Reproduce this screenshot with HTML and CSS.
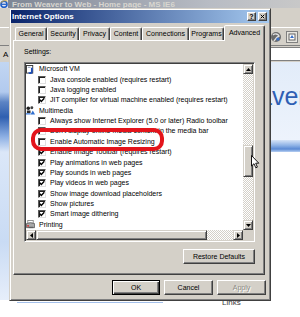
FILE: index.html
```html
<!DOCTYPE html>
<html>
<head>
<meta charset="utf-8">
<link rel="stylesheet" href="styles.css">
</head>
<body>
<div class="browser">
  <div class="ie-title">
    <svg class="ie-icon" viewBox="0 0 8 8"><circle cx="4" cy="4.3" r="3" fill="none" stroke="#1f5fc8" stroke-width="1.6"/><path d="M1.5 4.3h5" stroke="#1f5fc8" stroke-width="1.2"/><path d="M0.5 3 C2 0.5 6 0.2 7.6 1.2" fill="none" stroke="#e8b020" stroke-width="0.8"/></svg>
    <span>From Weaver to Web - Home page - MS IE6</span>
  </div>
  <div class="ie-menubar"></div>
  <div class="ie-toolbar">
    <svg class="tb-icon" viewBox="0 0 12 14"><circle cx="6" cy="7" r="5" fill="#6b6b6b"/><path d="M3 5 C5 3 8 4 9 6 C7 7 5 9 4 11" fill="none" stroke="#e0e0e0" stroke-width="1.4"/><circle cx="8" cy="9" r="1.6" fill="#3a70c8"/></svg>
    <svg class="tb-icon" viewBox="0 0 12 14"><rect x="0.5" y="1.5" width="11" height="11" fill="#e8e6e0" stroke="#808080"/><rect x="3" y="4" width="6" height="6" fill="#fff" stroke="#606060"/><path d="M4 8 L6 5 L8 8 Z" fill="#3a70c8"/></svg>
  </div>
  <div class="ie-address">
    <span class="addr-label">A</span>
    <div class="addr-field"></div>
  </div>
  <div class="ie-page">
    <div class="page-side"></div>
    <div class="page-main">
      <div class="page-banner">Weaver</div>
      <div class="page-stripe"></div>
      <div class="page-body">
        <div class="page-foot">
          <div class="page-rule"></div>
          <span class="links">Links</span>
        </div>
      </div>
    </div>
  </div>
</div>

<div class="dialog">
  <div class="titlebar">
    <span class="title-text">Internet Options</span>
    <span class="tbtn help">?</span>
    <span class="tbtn close"><svg viewBox="0 0 7 7"><path d="M1 1 L6 6 M6 1 L1 6" stroke="#000" stroke-width="1.4"/></svg></span>
  </div>
  <div class="tabs">
    <div class="tab">General</div>
    <div class="tab">Security</div>
    <div class="tab">Privacy</div>
    <div class="tab">Content</div>
    <div class="tab">Connections</div>
    <div class="tab">Programs</div>
    <div class="tab active">Advanced</div>
  </div>
  <div class="panel">
    <div class="settings-label">Settings:</div>
    <div class="listbox">
      <div class="rows">
        <div class="row cat">
          <svg class="cat-icon" viewBox="0 0 10 10"><rect x="0.5" y="0.5" width="7" height="8.5" fill="#fff" stroke="#303030"/><path d="M6.5 3 L6.5 7.5 C6.5 9.5 3.5 9.5 3.5 8" fill="none" stroke="#1e4fb8" stroke-width="2"/><rect x="2" y="2" width="3" height="1" fill="#8090b0"/></svg>
          <span>Microsoft VM</span>
        </div>
        <div class="row opt"><span class="cb"></span><span>Java console enabled (requires restart)</span></div>
        <div class="row opt"><span class="cb"></span><span>Java logging enabled</span></div>
        <div class="row opt"><span class="cb checked"><svg viewBox="0 0 6 6"><path d="M0.8 2.8 L2.3 4.4 L5.3 1.2" fill="none" stroke="#000" stroke-width="1.4"/></svg></span><span>JIT compiler for virtual machine enabled (requires restart)</span></div>
        <div class="row cat">
          <svg class="cat-icon" viewBox="0 0 10 10"><circle cx="2.5" cy="2.5" r="2" fill="#202020"/><circle cx="6.5" cy="2" r="1.6" fill="#404040"/><rect x="1" y="5" width="4" height="3" fill="#2a2a2a"/><path d="M5 9.5 L7.5 5 L10 9.5 Z" fill="#2f6fd0"/><rect x="0" y="8" width="5" height="1.5" fill="#4a86e0"/></svg>
          <span>Multimedia</span>
        </div>
        <div class="row opt"><span class="cb"></span><span>Always show Internet Explorer (5.0 or later) Radio toolbar</span></div>
        <div class="row opt"><span class="cb"></span><span>Don't display online media content in the media bar</span></div>
        <div class="row opt"><span class="cb"></span><span>Enable Automatic Image Resizing</span></div>
        <div class="row opt"><span class="cb checked"><svg viewBox="0 0 6 6"><path d="M0.8 2.8 L2.3 4.4 L5.3 1.2" fill="none" stroke="#000" stroke-width="1.4"/></svg></span><span>Enable Image Toolbar (requires restart)</span></div>
        <div class="row opt"><span class="cb checked"><svg viewBox="0 0 6 6"><path d="M0.8 2.8 L2.3 4.4 L5.3 1.2" fill="none" stroke="#000" stroke-width="1.4"/></svg></span><span>Play animations in web pages</span></div>
        <div class="row opt"><span class="cb checked"><svg viewBox="0 0 6 6"><path d="M0.8 2.8 L2.3 4.4 L5.3 1.2" fill="none" stroke="#000" stroke-width="1.4"/></svg></span><span>Play sounds in web pages</span></div>
        <div class="row opt"><span class="cb checked"><svg viewBox="0 0 6 6"><path d="M0.8 2.8 L2.3 4.4 L5.3 1.2" fill="none" stroke="#000" stroke-width="1.4"/></svg></span><span>Play videos in web pages</span></div>
        <div class="row opt"><span class="cb checked"><svg viewBox="0 0 6 6"><path d="M0.8 2.8 L2.3 4.4 L5.3 1.2" fill="none" stroke="#000" stroke-width="1.4"/></svg></span><span>Show image download placeholders</span></div>
        <div class="row opt"><span class="cb checked"><svg viewBox="0 0 6 6"><path d="M0.8 2.8 L2.3 4.4 L5.3 1.2" fill="none" stroke="#000" stroke-width="1.4"/></svg></span><span>Show pictures</span></div>
        <div class="row opt"><span class="cb checked"><svg viewBox="0 0 6 6"><path d="M0.8 2.8 L2.3 4.4 L5.3 1.2" fill="none" stroke="#000" stroke-width="1.4"/></svg></span><span>Smart image dithering</span></div>
        <div class="row cat">
          <svg class="cat-icon" viewBox="0 0 10 10"><rect x="2" y="0.5" width="6" height="3" fill="#fff" stroke="#707070" stroke-width="0.8"/><path d="M0.5 4 Q5 2 9.5 4 L9.5 8.5 L0.5 8.5 Z" fill="#a8a8a8" stroke="#505050" stroke-width="0.8"/><circle cx="2.3" cy="6.5" r="1" fill="#e02020"/><rect x="3" y="7.5" width="5" height="1.5" fill="#606060"/></svg>
          <span>Printing</span>
        </div>
      </div>
      <div class="vscroll">
        <div class="sb-btn"><svg viewBox="0 0 5 3"><path d="M0 3 L5 3 L2.5 0 Z" fill="#000"/></svg></div>
        <div class="sb-thumb-v"></div>
        <div class="sb-btn sb-end"><svg viewBox="0 0 5 3"><path d="M0 0 L5 0 L2.5 3 Z" fill="#000"/></svg></div>
      </div>
      <div class="hscroll">
        <div class="sb-btn"><svg class="hz" viewBox="0 0 3 5"><path d="M3 0 L3 5 L0 2.5 Z" fill="#000"/></svg></div>
        <div class="sb-thumb-h"></div>
        <div class="sb-btn sb-end-h"><svg class="hz" viewBox="0 0 3 5"><path d="M0 0 L0 5 L3 2.5 Z" fill="#000"/></svg></div>
      </div>
      <div class="sb-corner"></div>
      <div class="highlight"></div>
    </div>
    <div class="btn restore">Restore Defaults</div>
  </div>
  <div class="dialog-buttons">
    <div class="btn ok default">OK</div>
    <div class="btn cancel">Cancel</div>
    <div class="btn apply disabled">Apply</div>
  </div>
</div>

<svg class="cursor" viewBox="0 0 9 14"><path d="M0.5 0.5 L0.5 11 L3 8.7 L4.8 12.8 L6.4 12.1 L4.7 8.2 L7.8 8.2 Z" fill="#fff" stroke="#000" stroke-width="0.9" stroke-linejoin="round"/></svg>
</body>
</html>
```
FILE: styles.css
```css
* { box-sizing: border-box; margin: 0; padding: 0; }
html, body { width: 300px; height: 317px; overflow: hidden; }
body {
  position: relative;
  background: #fff;
  font-family: "Liberation Sans", Arial, sans-serif;
  font-size: 7px;
  color: #000;
}

/* ---------- background browser ---------- */
.browser { width: 300px; height: 317px; display: flex; flex-direction: column; overflow: hidden; }
.ie-title {
  height: 8px;
  background: linear-gradient(90deg, #7c8494, #b8bcc4 70%, #c8c8c8);
  display: flex; align-items: flex-end;
  overflow: hidden;
  color: #d8d6d0; font-weight: bold; font-size: 8px; line-height: 8px;
  white-space: nowrap;
}
.ie-icon { width: 8px; height: 8px; flex: none; background: #e8e8f0; }
.ie-title span { padding-left: 4px; margin-bottom: -1px; }
.ie-menubar { height: 20px; background: #d4d0c8; border-bottom: 1px solid #fff; }
.ie-toolbar {
  height: 18px; background: #d4d0c8;
  display: flex; justify-content: flex-end; align-items: center;
  gap: 4px; padding-right: 2px;
  border-bottom: 1px solid #808080;
}
.tb-icon { width: 12px; height: 14px; }
.ie-address {
  height: 16px; background: #d4d0c8;
  display: flex; align-items: center; padding-left: 3px;
}
.addr-label { font-size: 8px; color: #000; width: 40px; }
.addr-field { flex: 1; height: 14px; background: #fff; border: 1px solid #808080; border-right: none; }
.ie-page { flex: 1; display: flex; min-height: 0; }
.page-side {
  width: 9px; height: 238px; flex: none;
  background: linear-gradient(180deg, #c2d6f2 0, #b2caee 30px, #5c84c4 40px, #2f5fb0 55px, #8eb0e4 75px, #dbe7f8 90px, #c9dbf4 180px, #e6eefa 238px);
}
.page-main { flex: 1; min-width: 0; overflow: hidden; display: flex; flex-direction: column; }
.page-banner {
  height: 78px; flex: none;
  background: linear-gradient(180deg, #e2ecf9, #edf3fc);
  padding-top: 22px; padding-left: 212px;
  font-size: 25px; line-height: 25px; color: #2f5fb4;
  white-space: nowrap; overflow: hidden;
}
.page-stripe { height: 12px; flex: none; background: linear-gradient(180deg, #d6e4f7, #8fb3e6 45%, #5a8ad4 75%, #b8d0f2); }
.page-body { flex: 1; background: #fff; }
.page-foot { margin-top: 145px; height: 10px; display: flex; align-items: center; }
.page-rule { width: 146px; height: 1px; margin-left: 8px; background: #a4c0ea; }
.links { margin-left: 59px; font-size: 8px; color: #404040; }

/* ---------- dialog ---------- */
.dialog {
  position: absolute; left: 9px; top: 8px;
  width: 262px; height: 293px;
  background: #d4d0c8;
  border: 1px solid; border-color: #d4d0c8 #404040 #404040 #d4d0c8;
  box-shadow: inset 1px 1px #fff, inset -1px -1px #808080;
  padding: 1px;
  display: flex; flex-direction: column;
}
.titlebar {
  height: 13px;
  background: linear-gradient(90deg, #0a246a, #a6caf0);
  display: flex; align-items: center;
  padding: 0 2px 0 1px;
}
.title-text { flex: 1; color: #fff; font-weight: bold; font-size: 8px; line-height: 13px; }
.tbtn {
  width: 9px; height: 9px; margin-left: 2px;
  background: #d4d0c8;
  border: 1px solid; border-color: #fff #404040 #404040 #fff;
  box-shadow: inset -1px -1px #808080;
  display: flex; align-items: center; justify-content: center;
  font-weight: bold; font-size: 7px; line-height: 7px;
}
.tbtn svg { width: 5px; height: 5px; }

.tabs {
  margin-top: 2px; height: 15px;
  padding-left: 4px;
  display: grid;
  grid-template-columns: 32px 32px 31px 32px 47px 35px 41px;
  align-items: end;
}
.tab {
  height: 13px;
  border: 1px solid; border-bottom: none;
  border-color: #fff #404040 transparent #fff;
  box-shadow: inset -1px 0 #808080;
  border-radius: 2px 2px 0 0;
  text-align: center; line-height: 12px;
  white-space: nowrap;
}
.tab.active {
  height: 16px; margin-bottom: -1px;
  position: relative; z-index: 1;
  background: #d4d0c8;
  line-height: 14px;
}

.panel {
  margin-left: 2px; width: 252px; height: 235px;
  border: 1px solid; border-color: #fff #404040 #404040 #fff;
  box-shadow: inset -1px -1px #808080;
  padding: 6px 9px 0 10px;
  display: flex; flex-direction: column;
}
.settings-label { height: 10px; line-height: 10px; }
.listbox {
  position: relative;
  margin-top: 5px; width: 231px; height: 180px;
  background: #fff;
  border: 1px solid; border-color: #808080 #fff #fff #808080;
  box-shadow: inset 1px 1px #404040, inset -1px -1px #d4d0c8;
  padding: 1px;
  display: grid;
  grid-template-columns: 1fr 10px;
  grid-template-rows: 1fr 10px;
}
.rows { overflow: hidden; background: #fff; }
.row {
  height: 10.375px;
  display: flex; align-items: center;
  white-space: nowrap; line-height: 10px;
}
.cat-icon { width: 9px; height: 9px; margin-right: 4px; flex: none; }
.row.opt { padding-left: 12px; }
.cb {
  width: 8px; height: 8px; margin-right: 4px; flex: none;
  background: #fff;
  border: 1px solid; border-color: #5a5a5a #e0e0e0 #e0e0e0 #5a5a5a;
  box-shadow: inset 1px 1px #202020;
  display: flex; align-items: center; justify-content: center;
}
.cb svg { width: 6px; height: 6px; }

.vscroll {
  display: flex; flex-direction: column;
  background: repeating-conic-gradient(#fff 0 25%, #d4d0c8 0 50%) 0 0 / 2px 2px;
}
.hscroll {
  display: flex;
  background: repeating-conic-gradient(#fff 0 25%, #d4d0c8 0 50%) 0 0 / 2px 2px;
}
.sb-btn, .sb-thumb-v, .sb-thumb-h {
  width: 10px; height: 10px; flex: none;
  background: #d4d0c8;
  border: 1px solid; border-color: #d4d0c8 #404040 #404040 #d4d0c8;
  box-shadow: inset 1px 1px #fff, inset -1px -1px #808080;
  display: flex; align-items: center; justify-content: center;
}
.sb-btn svg { width: 5px; height: 3px; }
.sb-btn svg.hz { width: 3px; height: 5px; }
.sb-thumb-v { height: 32px; margin-top: 71px; }
.sb-end { margin-top: auto; }
.sb-thumb-h { width: 171px; }
.sb-end-h { margin-left: auto; }
.sb-corner { background: #d4d0c8; }

.highlight {
  position: absolute; left: 6px; top: 65px;
  width: 133px; height: 23px;
  border: 4px solid #e3141b; border-radius: 10px;
}

.btn {
  height: 15px;
  background: #d4d0c8;
  border: 1px solid; border-color: #fff #404040 #404040 #fff;
  box-shadow: inset -1px -1px #808080;
  text-align: center; line-height: 13px;
  white-space: nowrap;
}
.restore { align-self: flex-end; margin-top: 7px; width: 72px; }
.dialog-buttons {
  margin-top: 5px; padding-right: 3px;
  display: flex; justify-content: flex-end; gap: 4px;
}
.ok { width: 48px; }
.cancel, .apply { width: 49px; }
.btn.default {
  border-color: #000;
  box-shadow: inset 1px 1px #fff, inset -1px -1px #404040, inset -2px -2px #808080;
}
.btn.disabled { color: #8c8a84; text-shadow: 1px 1px #fff; }

.cursor { position: absolute; left: 251px; top: 155px; width: 9px; height: 14px; }
```
